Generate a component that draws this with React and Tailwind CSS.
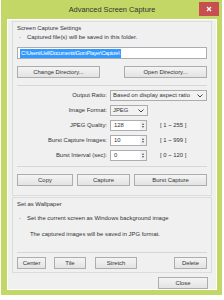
function Btn({ children, className = "" }) {
  return (
    <div
      className={
        "flex items-center justify-center whitespace-nowrap border border-[#adadad] bg-gradient-to-b from-[#f4f4f4] to-[#e3e3e3] text-[5.9px] text-[#333] " +
        className
      }
    >
      {children}
    </div>
  );
}

function Spin({ value }) {
  return (
    <div className="flex h-[11px] w-[37px] items-center border border-[#abadb3] bg-white">
      <span className="flex-1 pl-[3px] text-[5.9px] text-[#333]">{value}</span>
      <div className="flex h-full w-[6px] flex-col items-center justify-center gap-[1px] bg-[#f0f0f0]">
        <div className="h-0 w-0 border-x-[1.5px] border-b-[2px] border-x-transparent border-b-[#555]" />
        <div className="h-0 w-0 border-x-[1.5px] border-t-[2px] border-x-transparent border-t-[#555]" />
      </div>
    </div>
  );
}

function Chevron() {
  return (
    <svg width="6" height="4" viewBox="0 0 6 4" className="mr-[3px]">
      <path d="M0.5 0.5 L3 3 L5.5 0.5" fill="none" stroke="#444" strokeWidth="1" />
    </svg>
  );
}

function Row({ label, children }) {
  return (
    <div className="flex h-[15px] items-center">
      <div className="w-[93px] whitespace-nowrap pr-[3px] text-right text-[5.9px] text-[#333]">{label}</div>
      {children}
    </div>
  );
}

export default function App() {
  return (
    <div className="h-[300px] w-[224px] overflow-hidden bg-white [font-family:'Liberation_Sans',Arial,sans-serif]">
      <div className="ml-[1px] flex h-[295px] w-[221px] flex-col bg-[#c3d766] px-[6px] pb-[5px] pr-[5px]">
        {/* title bar */}
        <div className="relative flex h-[20px] items-center justify-center">
          <span className="text-[7.4px] text-[#333]">Advanced Screen Capture</span>
          <div className="absolute right-[-2px] top-[2px] flex h-[14px] w-[20px] items-center justify-center bg-[#c84f4f]">
            <svg width="6" height="6" viewBox="0 0 6 6">
              <path d="M1 1 L5 5 M5 1 L1 5" stroke="#fff" strokeWidth="1.3" />
            </svg>
          </div>
        </div>
        {/* client */}
        <div className="flex flex-1 flex-col border border-white bg-[#f0f0f0] px-[4px] pt-[1px] text-[5.9px] text-[#333]">
          {/* panel 1 */}
          <div className="flex h-[175px] flex-col border border-[#dcdcdc] px-[4px]">
            <div className="mt-[2px] flex h-[9px] items-center whitespace-nowrap">Screen Capture Settings</div>
            <div className="flex h-[9px] items-center whitespace-nowrap">
              <span className="w-[10px] pl-[2px]">·</span>
              <span>Captured file(s) will be saved in this folder.</span>
            </div>
            <div className="mt-[5px] flex h-[12px] items-center border border-[#abadb3] bg-white pl-[2px]">
              <span className="whitespace-nowrap bg-[#3399ff] px-[1px] text-[5.5px] leading-[9px] tracking-[-0.35px] text-white">
                C:\Users\Ueli\Documents\GomPlayer\Capture\
              </span>
            </div>
            <div className="mt-[7px] flex justify-between">
              <Btn className="h-[12px] w-[83px]">Change Directory...</Btn>
              <Btn className="h-[12px] w-[83px]">Open Directory...</Btn>
            </div>
            <div className="mt-[7px] border-t border-[#d6d6d6]" />
            <div className="mt-[2px] flex flex-col">
              <Row label="Output Ratio:">
                <div className="flex h-[11px] w-[97px] items-center justify-between border border-[#acacac] bg-[#f2f2f2]">
                  <span className="whitespace-nowrap pl-[2px]">Based on display aspect ratio</span>
                  <Chevron />
                </div>
              </Row>
              <Row label="Image Format:">
                <div className="flex h-[11px] w-[38px] items-center justify-between border border-[#acacac] bg-[#f2f2f2]">
                  <span className="pl-[2px]">JPEG</span>
                  <Chevron />
                </div>
              </Row>
              <Row label="JPEG Quality:">
                <Spin value="128" />
                <span className="ml-[13px] whitespace-nowrap">[ 1 ~ 255 ]</span>
              </Row>
              <Row label="Burst Capture Images:">
                <Spin value="10" />
                <span className="ml-[13px] whitespace-nowrap">[ 1 ~ 999 ]</span>
              </Row>
              <Row label="Burst Interval (sec):">
                <Spin value="0" />
                <span className="ml-[13px] whitespace-nowrap">[ 0 ~ 120 ]</span>
              </Row>
            </div>
            <div className="mt-[3px] border-t border-[#d6d6d6]" />
            <div className="mt-[7px] flex gap-[4px]">
              <Btn className="h-[12px] w-[56px]">Copy</Btn>
              <Btn className="h-[12px] w-[53px]">Capture</Btn>
              <Btn className="h-[12px] flex-1">Burst Capture</Btn>
            </div>
          </div>
          {/* panel 2 */}
          <div className="mt-[1px] flex h-[76px] flex-col border border-[#dcdcdc] px-[4px]">
            <div className="mt-[2px] flex h-[9px] items-center whitespace-nowrap">Set as Wallpaper</div>
            <div className="mt-[5px] flex h-[9px] items-center whitespace-nowrap">
              <span className="w-[10px] pl-[2px]">·</span>
              <span>Set the current screen as Windows background image</span>
            </div>
            <div className="mt-[7px] flex h-[9px] items-center whitespace-nowrap pl-[13px]">
              The captured images will be saved in JPG format.
            </div>
            <div className="mt-[13px] border-t border-[#d6d6d6]" />
            <div className="mt-[4px] flex">
              <Btn className="h-[12px] w-[29px]">Center</Btn>
              <Btn className="ml-[8px] h-[12px] w-[32px]">Tile</Btn>
              <Btn className="ml-[9px] h-[12px] w-[42px]">Stretch</Btn>
              <div className="flex-1" />
              <Btn className="h-[12px] w-[33px]">Delete</Btn>
            </div>
          </div>
          <div className="mt-[4px] flex justify-end pr-[4px]">
            <Btn className="h-[12px] w-[50px]">Close</Btn>
          </div>
        </div>
      </div>
    </div>
  );
}
